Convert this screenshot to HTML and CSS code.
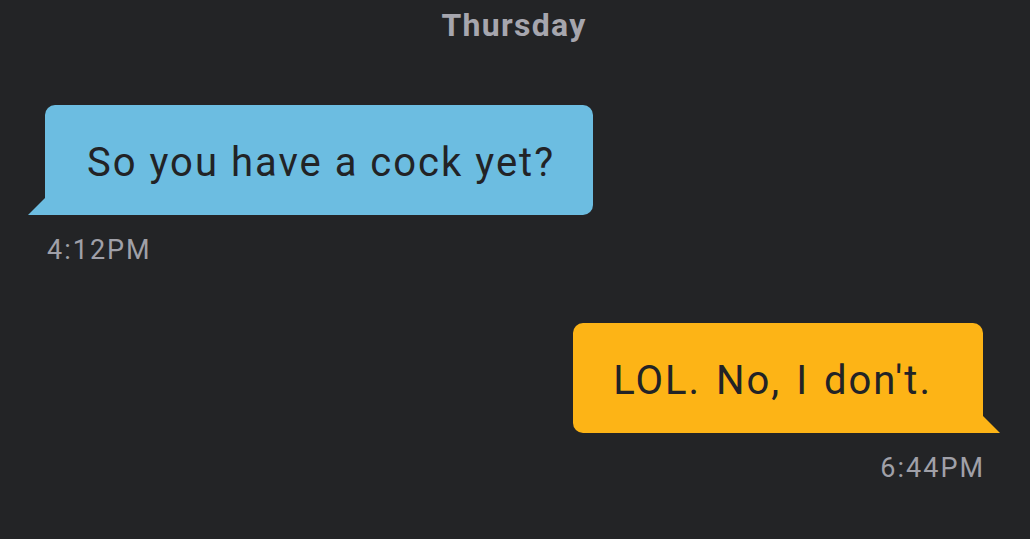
FILE: index.html
```html
<!DOCTYPE html>
<html lang="en">
<head>
    <meta charset="UTF-8">
    <meta name="viewport" content="width=device-width, initial-scale=1.0">
    <title>Chat</title>
    <link rel="stylesheet" href="styles.css">
</head>
<body>
    <div class="chat">
        <div class="day">Thursday</div>

        <div class="message message-in">
            <div class="bubble bubble-in">So you have a cock yet?</div>
            <div class="time">4:12PM</div>
        </div>

        <div class="message message-out">
            <div class="bubble bubble-out">LOL. No, I don't.</div>
            <div class="time">6:44PM</div>
        </div>
    </div>
</body>
</html>
```

FILE: styles.css
```css
* {
    margin: 0;
    padding: 0;
    box-sizing: border-box;
}

body {
    width: 100vw;
    height: 100vh;
    background: #232426;
    overflow: hidden;
    font-family: Roboto, 'DejaVu Sans', sans-serif;
}

.chat {
    display: flex;
    flex-direction: column;
    padding: 4px 47px 0 45px;
}

.day {
    text-align: center;
    color: #a6a6ae;
    font-size: 32px;
    font-weight: bold;
    line-height: 42px;
    letter-spacing: 1.3px;
}

.message {
    display: flex;
    flex-direction: column;
}

.message-in {
    align-items: flex-start;
    margin-top: 59px;
}

.message-out {
    align-items: flex-end;
    margin-top: 57px;
}

.bubble {
    position: relative;
    height: 110px;
    display: flex;
    align-items: center;
    padding: 5px 38px 0 42px;
    border-radius: 10px;
    color: #222326;
    font-size: 40px;
    line-height: 1;
    letter-spacing: 2px;
}

.bubble::after {
    content: '';
    position: absolute;
    bottom: 0;
    width: 18px;
    height: 18px;
}

.bubble-in {
    background: #6cbde1;
    border-bottom-left-radius: 0;
}

.bubble-in::after {
    left: -17px;
    background: #6cbde1;
    clip-path: polygon(100% 0, 100% 100%, 0 100%);
}

.bubble-out {
    background: #fdb416;
    border-bottom-right-radius: 0;
    padding: 5px 51px 0 40px;
    word-spacing: 3px;
}

.bubble-out::after {
    right: -17px;
    background: #fdb416;
    clip-path: polygon(0 0, 100% 100%, 0 100%);
}

.time {
    margin-top: 19px;
    color: #a0a0a8;
    font-size: 27px;
    line-height: 32px;
    letter-spacing: 2px;
}

.message-in .time {
    margin-left: 2px;
}

.message-out .time {
    margin-right: -2px;
}
```
